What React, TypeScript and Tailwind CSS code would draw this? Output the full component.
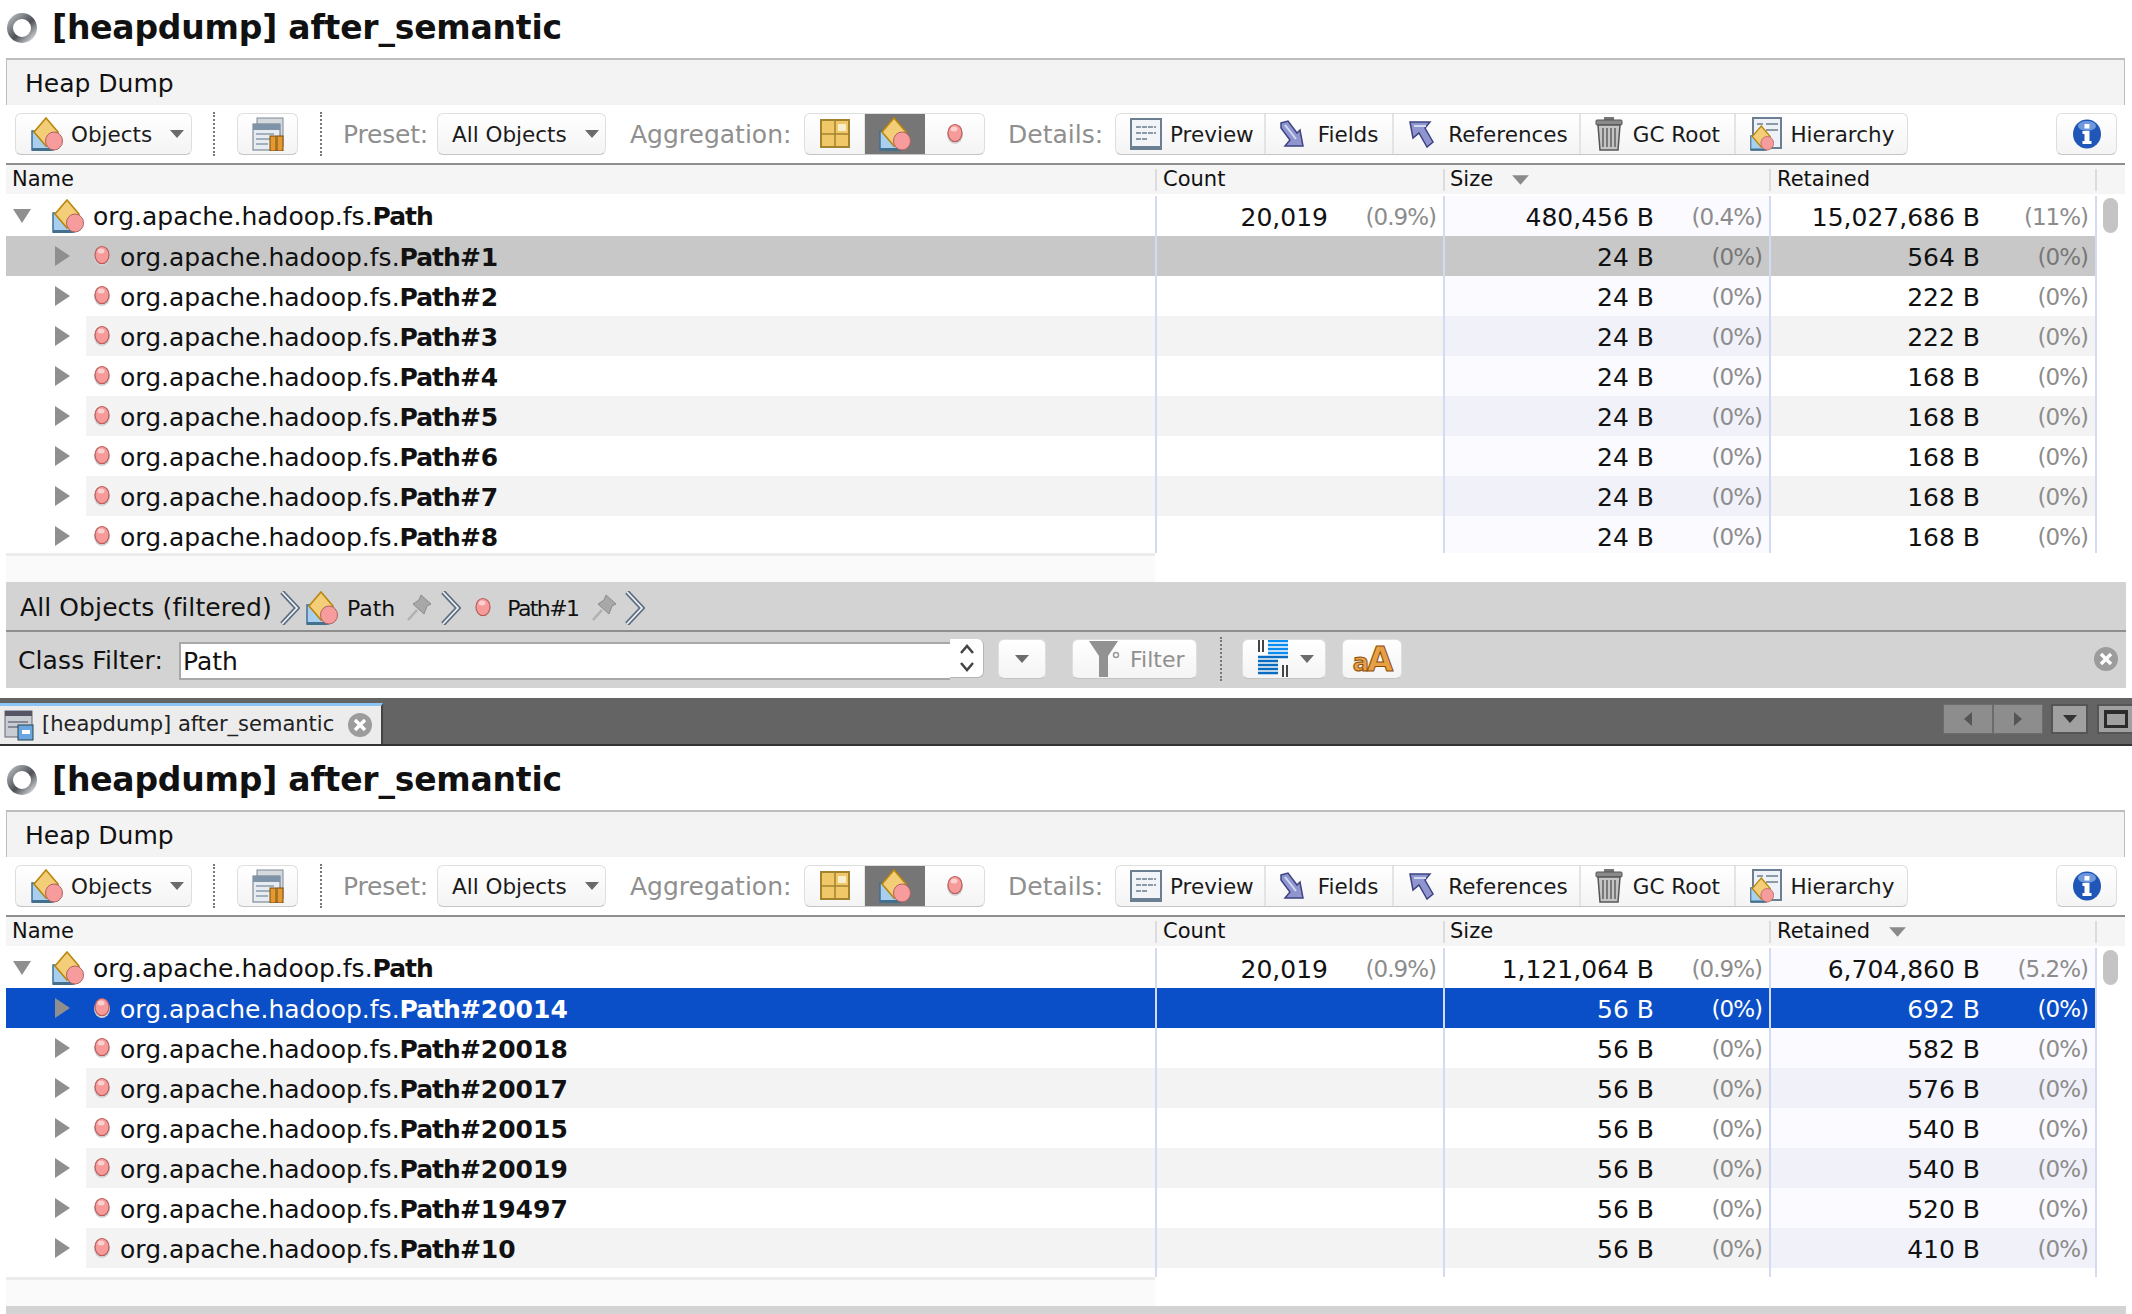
import { ReactNode } from "react";

const ClassIcon = ({ size = 32 }: { size?: number }) => (
  <svg width={size} height={size + 2} viewBox="0 0 32 34" className="shrink-0">
    <path d="M1 14 L14 14 L22 33 L1 33 Z" fill="#a8d0ee" stroke="#3f6f96" strokeWidth="1.5" />
    <rect x="1" y="31" width="20" height="3" fill="#44708f" />
    <path d="M15 1 L27 15 L15 29 L3 15 Z" fill="#f3cd78" stroke="#b8860b" strokeWidth="1.6" />
    <ellipse cx="23" cy="24" rx="8.5" ry="9" fill="#f79c9c" stroke="#b06060" strokeWidth="1" />
  </svg>
);

const Dot = () => (
  <svg width="18" height="24" viewBox="0 0 18 24" className="shrink-0">
    <ellipse cx="9" cy="13" rx="8" ry="9" fill="#d0d0d0" />
    <ellipse cx="9" cy="11" rx="7" ry="8.5" fill="#f79a9a" stroke="#b85c5c" strokeWidth="1.2" />
    <ellipse cx="8" cy="7" rx="3.5" ry="2.5" fill="#fbd0d0" />
  </svg>
);

const TriRight = () => (
  <svg width="15" height="24" viewBox="0 0 15 24" className="shrink-0">
    <path d="M0 2 L15 12 L0 22 Z" fill="#8f8f8f" />
  </svg>
);

const TriDown = () => (
  <svg width="18" height="18" viewBox="0 0 18 18" className="shrink-0">
    <path d="M0 2 L18 2 L9 16 Z" fill="#8f8f8f" />
  </svg>
);

const Caret = ({ color = "#6b6b6b", w = 14, h = 10 }: { color?: string; w?: number; h?: number }) => (
  <svg width={w} height={h} viewBox="0 0 14 10" className="shrink-0">
    <path d="M0 1 L14 1 L7 9 Z" fill={color} />
  </svg>
);

const Spinner = () => (
  <svg width="32" height="32" viewBox="0 0 32 32" className="shrink-0">
    <defs>
      <linearGradient id="ring" x1="0" y1="0" x2="1" y2="1">
        <stop offset="0" stopColor="#b4b8bc" />
        <stop offset="0.55" stopColor="#4c5056" />
        <stop offset="1" stopColor="#d8dade" />
      </linearGradient>
    </defs>
    <circle cx="16" cy="16" r="12" fill="none" stroke="url(#ring)" strokeWidth="6" />
  </svg>
);

const MemoryIcon = () => (
  <svg width="32" height="34" viewBox="0 0 32 34">
    <rect x="5" y="1" width="26" height="28" fill="#d5d9dd" stroke="#7d8a96" />
    <rect x="1" y="7" width="27" height="26" fill="#e8ecf0" stroke="#667788" />
    <rect x="1" y="7" width="27" height="6" fill="#7f93a8" />
    <path d="M4 17h18M4 22h14M4 27h12" stroke="#9fb0c0" strokeWidth="2" />
    <rect x="18" y="19" width="6" height="15" fill="#e69a2c" stroke="#7a4a10" />
    <rect x="25" y="19" width="6" height="15" fill="#e69a2c" stroke="#7a4a10" />
  </svg>
);

const GridIcon = () => (
  <svg width="30" height="30" viewBox="0 0 30 30">
    <rect x="1" y="1" width="28" height="27" fill="#f0c868" stroke="#a3832f" strokeWidth="2" />
    <path d="M15 1v27M1 15h28" stroke="#a3832f" strokeWidth="1.5" />
    <rect x="18" y="5" width="8" height="7" fill="#f9eecb" />
  </svg>
);

const PreviewIcon = () => (
  <svg width="32" height="32" viewBox="0 0 32 32">
    <rect x="1" y="1" width="30" height="30" fill="#f2f4f7" stroke="#6b7f93" strokeWidth="2" />
    <rect x="1" y="28" width="30" height="3" fill="#6b7f93" />
    <path d="M6 9h20M6 15h20M6 21h12" stroke="#8a9aa8" strokeWidth="2" strokeDasharray="5 1" />
  </svg>
);

const FieldsIcon = () => (
  <svg width="24" height="28" viewBox="0 0 24 28">
    <path d="M1 3 L8 1 L17 13 L20 10 L23 26 L5 26 L10 20 L1 8 Z" fill="#8f95cf" stroke="#3d4480" strokeWidth="1.5" />
    <path d="M5 5 L16 19" stroke="#d4d7f0" strokeWidth="2" />
  </svg>
);

const RefsIcon = () => (
  <svg width="26" height="28" viewBox="0 0 26 28">
    <path d="M2 2 L22 2 L17 8 L25 22 L19 27 L11 13 L5 18 Z" fill="#8f95cf" stroke="#3d4480" strokeWidth="1.5" />
    <path d="M6 6 L18 6" stroke="#d4d7f0" strokeWidth="2" />
  </svg>
);

const TrashIcon = () => (
  <svg width="28" height="34" viewBox="0 0 28 34">
    <rect x="9" y="0" width="10" height="4" fill="#777" />
    <rect x="1" y="3" width="26" height="5" rx="1" fill="#8a8a8a" stroke="#555" />
    <path d="M3 8 H25 L23 33 H5 Z" fill="#c4c4c4" stroke="#555" strokeWidth="1.5" />
    <path d="M8 11v19M12 11v19M16 11v19M20 11v19" stroke="#666" strokeWidth="1.6" />
  </svg>
);

const HierarchyIcon = () => (
  <div className="relative w-[32px] h-[34px]">
    <svg width="30" height="32" viewBox="0 0 30 32" className="absolute right-0 top-0">
      <rect x="1" y="1" width="28" height="30" fill="#eef1f5" stroke="#6b7f93" strokeWidth="2" />
      <path d="M5 7h6M14 7h12M14 13h12" stroke="#8a9aa8" strokeWidth="2" />
    </svg>
    <div className="absolute left-0 bottom-0">
      <ClassIcon size={24} />
    </div>
  </div>
);

const InfoIcon = () => (
  <svg width="28" height="30" viewBox="0 0 28 30">
    <ellipse cx="14" cy="15" rx="14" ry="14.5" fill="#1f56b8" />
    <ellipse cx="14" cy="7" rx="9" ry="5" fill="#6f97dc" />
    <rect x="11.5" y="5" width="5" height="4.5" fill="#fff" />
    <path d="M9.5 12h7v10h2v3h-9v-3h2v-7h-2z" fill="#fff" />
  </svg>
);

const Funnel = () => (
  <svg width="32" height="38" viewBox="0 0 32 38">
    <path d="M1 1 H30 L20 16 V37 H11 V16 Z" fill="#929292" />
    <circle cx="28" cy="15" r="2.5" fill="none" stroke="#999" strokeWidth="1.5" />
  </svg>
);

const ListIcon = () => (
  <svg width="30" height="38" viewBox="0 0 30 38">
    <rect x="0" y="0" width="2" height="12" fill="#444" />
    <rect x="4" y="0" width="2" height="12" fill="#444" />
    <path d="M10 1h20M10 5h20M10 9h20M10 13h20" stroke="#0d8cf0" strokeWidth="2.5" />
    <path d="M0 17h30M0 21h20M0 25h20M0 29h20M0 33h20" stroke="#0a6cc0" strokeWidth="2.5" />
    <rect x="24" y="25" width="2" height="12" fill="#444" />
    <rect x="28" y="25" width="2" height="12" fill="#444" />
  </svg>
);

const Pin = () => (
  <svg width="26" height="28" viewBox="0 0 26 28">
    <path d="M15 1 L25 10 L21 12 L18 20 L7 10 L13 6 Z" fill="#a8a8a8" stroke="#8c8c8c" />
    <path d="M11 16 L2 26" stroke="#b0b0b0" strokeWidth="2.5" />
  </svg>
);

const Crumb = () => (
  <svg width="20" height="34" viewBox="0 0 20 34" className="shrink-0">
    <path d="M2 1 L17 17 L2 33" fill="none" stroke="#5a6e80" strokeWidth="5" />
    <path d="M2 1 L17 17 L2 33" fill="none" stroke="#eef0f2" strokeWidth="1.8" />
  </svg>
);

const CloseDot = ({ size = 24 }: { size?: number }) => (
  <svg width={size} height={size} viewBox="0 0 24 24" className="shrink-0">
    <circle cx="12" cy="12" r="12" fill="#9c9c9c" />
    <path d="M7 7 L17 17 M17 7 L7 17" stroke="#fff" strokeWidth="3.4" />
  </svg>
);

const Btn = ({ className, children }: { className: string; children?: ReactNode }) => (
  <div className={`flex items-center rounded-[6px] border border-[#dedede] border-b-[#c4c4c4] bg-linear-to-b from-white to-[#f4f4f4] shrink-0 ${className}`}>
    {children}
  </div>
);

const Sep = ({ className }: { className: string }) => (
  <div className={`w-0 h-[44px] border-l-2 border-dotted border-[#777] shrink-0 ${className}`} />
);

const DetailBtn = ({ w, icon, label, gap }: { w: string; icon: ReactNode; label: string; gap: string }) => (
  <div className={`flex items-center h-full border-r-2 border-[#e4e4e4] last:border-r-0 pl-[14px] ${w} ${gap}`}>
    {icon}
    <span className="pt-[2px]">{label}</span>
  </div>
);

const Toolbar = () => (
  <div className="flex items-center h-[58px] text-[21.5px] text-[#1a1a1a]">
    <Btn className="ml-[15px] w-[177px] h-[42px] pl-[15px] gap-[8px]">
      <ClassIcon />
      <span className="pt-[2px]">Objects</span>
      <span className="ml-[10px]"><Caret /></span>
    </Btn>
    <Sep className="ml-[21px]" />
    <Btn className="ml-[22px] w-[61px] h-[42px] justify-center"><MemoryIcon /></Btn>
    <Sep className="ml-[22px]" />
    <span className="ml-[21px] pt-[2px] text-[25px] tracking-[-0.2px] text-[#8f8f8f]">Preset:</span>
    <Btn className="ml-[9px] w-[169px] h-[42px] pl-[14px]">
      <span className="pt-[2px]">All Objects</span>
      <span className="ml-[18px]"><Caret /></span>
    </Btn>
    <span className="ml-[24px] pt-[2px] text-[25px] text-[#8f8f8f]">Aggregation:</span>
    <Btn className="absolute left-[804px] w-[181px] h-[42px] overflow-hidden">
      <div className="w-[60px] h-full flex items-center justify-center border-r border-[#e4e4e4]"><GridIcon /></div>
      <div className="w-[60px] h-full flex items-center justify-center bg-[#767676]"><ClassIcon /></div>
      <div className="flex-1 h-full flex items-center justify-center"><Dot /></div>
    </Btn>
    <span className="absolute left-[1008px] pt-[2px] text-[25px] text-[#8f8f8f]">Details:</span>
    <Btn className="absolute left-[1115px] w-[793px] h-[42px] overflow-hidden">
      <DetailBtn w="w-[150px]" gap="gap-[8px]" icon={<PreviewIcon />} label="Preview" />
      <DetailBtn w="w-[129px]" gap="gap-[14px]" icon={<FieldsIcon />} label="Fields" />
      <DetailBtn w="w-[187px]" gap="gap-[14px]" icon={<RefsIcon />} label="References" />
      <DetailBtn w="w-[156px]" gap="gap-[10px]" icon={<TrashIcon />} label="GC Root" />
      <DetailBtn w="w-[171px]" gap="gap-[8px]" icon={<HierarchyIcon />} label="Hierarchy" />
    </Btn>
    <Btn className="absolute left-[2056px] w-[61px] h-[42px] justify-center"><InfoIcon /></Btn>
  </div>
);

type Row = { id: string; size: string; retained: string };

const Num = ({ value, pct, selected }: { value: string; pct: string; selected?: string }) => (
  <div className="flex items-center justify-end h-full pr-[7px] pt-[3px]">
    <span>{value}</span>
    <span className={`w-[108px] text-right text-[23px] tracking-[-1px] ${selected === "blue" ? "text-white" : selected === "gray" ? "text-[#777]" : "text-[#8c8c8c]"}`}>{pct}</span>
  </div>
);

const colLine = "border-l-2 border-[#d3dbf3]";

const Panel = ({ rows, rootSize, rootRetained, sorted, selected, bodyH }: {
  rows: Row[];
  rootSize: [string, string];
  rootRetained: [string, string];
  sorted: "size" | "retained";
  selected: "gray" | "blue";
  bodyH: string;
}) => {
  const sizeTint = sorted === "size";
  return (
    <div className="relative">
      <div className="flex items-center h-[58px] pl-[6px] gap-[14px] pb-[2px]">
        <Spinner />
        <span className="text-[33px] tracking-[-0.2px] font-bold text-[#111]">[heapdump] after_semantic</span>
      </div>
      <div className="h-[47px] ml-[6px] mr-[7px] bg-[#f3f3f3] border-t-2 border-l border-r border-[#bdbdbd] pl-[18px] pt-[2px] flex items-center text-[25px] text-[#111]">
        Heap Dump
      </div>
      <div className="relative"><Toolbar /></div>
      <div className="ml-[6px] mr-[7px] border-t-2 border-[#8e8e8e]">
        <div className="flex items-center h-[29px] bg-[#f5f5f5] text-[21px] text-[#111] mb-[2px]">
          <div className="w-[1149px] pl-[6px]">Name</div>
          <div className="w-[288px] h-[22px] flex items-center pl-[6px] border-l-2 border-[#dcdcdc]">Count</div>
          <div className="w-[326px] h-[22px] flex items-center pl-[5px] gap-[18px] border-l-2 border-[#dcdcdc]">
            Size {sorted === "size" && <Caret color="#8a8a8a" w={19} h={12} />}
          </div>
          <div className="w-[326px] h-[22px] flex items-center pl-[6px] gap-[18px] border-l-2 border-[#dcdcdc]">
            Retained {sorted === "retained" && <Caret color="#8a8a8a" w={19} h={12} />}
          </div>
          <div className="w-[30px] h-[22px] border-l-2 border-[#dcdcdc]" />
        </div>
        <div className={`relative overflow-hidden text-[25px] text-[#111] ${bodyH}`}>
          <div className="flex h-[40px]">
            <div className="w-[1149px] flex items-center pl-[7px]">
              <TriDown />
              <span className="ml-[21px]"><ClassIcon /></span>
              <span className="ml-[9px] pt-[2px]">org.apache.hadoop.fs.<b className="tracking-[-1px]">Path</b></span>
            </div>
            <div className={`w-[288px] ${colLine}`}><Num value="20,019" pct="(0.9%)" /></div>
            <div className={`w-[326px] ${colLine} ${sizeTint ? "bg-[#fafaff]" : ""}`}><Num value={rootSize[0]} pct={rootSize[1]} /></div>
            <div className={`w-[326px] ${colLine} ${sizeTint ? "" : "bg-[#fafaff]"}`}><Num value={rootRetained[0]} pct={rootRetained[1]} /></div>
            <div className={`w-[30px] ${colLine}`} />
          </div>
          {rows.map((r, i) => {
            const isSel = i === 0;
            const alt = i % 2 === 0;
            const selBg = selected === "blue" ? "bg-[#0b4fc8] text-white" : "bg-[#c8c8c8]";
            const tint = alt ? "bg-[#f1f1fa]" : "bg-[#fafaff]";
            const plain = alt ? "bg-[#f3f3f3]" : "";
            return (
              <div key={r.id} className={`flex h-[40px] ${isSel ? selBg : ""}`}>
                <div className="w-[1149px] flex">
                  <div className="w-[80px] pl-[49px] flex items-center shrink-0"><TriRight /></div>
                  <div className={`flex-1 flex items-center pl-[7px] ${isSel ? "" : plain}`}>
                    <Dot />
                    <span className="ml-[9px] pt-[3px]">org.apache.hadoop.fs.<b><span className="tracking-[-1px]">Path</span>#{r.id}</b></span>
                  </div>
                </div>
                <div className={`w-[288px] ${colLine} ${isSel ? "" : plain}`} />
                <div className={`w-[326px] ${colLine} ${isSel ? "" : sizeTint ? tint : plain}`}>
                  <Num value={r.size} pct="(0%)" selected={isSel ? selected : undefined} />
                </div>
                <div className={`w-[326px] ${colLine} ${isSel ? "" : sizeTint ? plain : tint}`}>
                  <Num value={r.retained} pct="(0%)" selected={isSel ? selected : undefined} />
                </div>
              </div>
            );
          })}
          <div className="absolute right-0 top-0 bottom-0 w-[30px] bg-white border-l-2 border-[#d3dbf3]">
            <div className="ml-[6px] mt-[2px] w-[15px] h-[35px] rounded-full bg-[#c4c4c4]" />
          </div>
          <div className="absolute left-[1149px] top-0 bottom-0 w-0 border-l-2 border-[#d3dbf3]" />
          <div className="absolute left-[1437px] top-0 bottom-0 w-0 border-l-2 border-[#d3dbf3]" />
          <div className="absolute left-[1763px] top-0 bottom-0 w-0 border-l-2 border-[#d3dbf3]" />
        </div>
        <div className="w-[1149px] h-[29px] bg-[#fafafa] border-t-[3px] border-[#ececec]" />
      </div>
    </div>
  );
};

const firstRows: Row[] = [
  { id: "1", size: "24 B", retained: "564 B" },
  { id: "2", size: "24 B", retained: "222 B" },
  { id: "3", size: "24 B", retained: "222 B" },
  { id: "4", size: "24 B", retained: "168 B" },
  { id: "5", size: "24 B", retained: "168 B" },
  { id: "6", size: "24 B", retained: "168 B" },
  { id: "7", size: "24 B", retained: "168 B" },
  { id: "8", size: "24 B", retained: "168 B" },
];

const secondRows: Row[] = [
  { id: "20014", size: "56 B", retained: "692 B" },
  { id: "20018", size: "56 B", retained: "582 B" },
  { id: "20017", size: "56 B", retained: "576 B" },
  { id: "20015", size: "56 B", retained: "540 B" },
  { id: "20019", size: "56 B", retained: "540 B" },
  { id: "19497", size: "56 B", retained: "520 B" },
  { id: "10", size: "56 B", retained: "410 B" },
];

export default function App() {
  return (
    <div className="relative w-[2132px] h-[1314px] overflow-hidden bg-white font-['DejaVu_Sans',sans-serif]">
      <Panel
        rows={firstRows}
        rootSize={["480,456 B", "(0.4%)"]}
        rootRetained={["15,027,686 B", "(11%)"]}
        sorted="size"
        selected="gray"
        bodyH="h-[357px]"
      />
      {/* breadcrumb + class filter */}
      <div className="ml-[6px] mr-[6px] h-[50px] pt-[4px] bg-[#d3d3d3] border-b-2 border-[#8e8e8e] flex items-center pl-[14px] text-[25px] text-[#111]">
        <span className="tracking-[0.1px]">All Objects (filtered)</span>
        <span className="ml-[8px]"><Crumb /></span>
        <span className="ml-[6px]"><ClassIcon /></span>
        <span className="ml-[9px] text-[22px]">Path</span>
        <span className="ml-[11px]"><Pin /></span>
        <span className="ml-[9px]"><Crumb /></span>
        <span className="ml-[13px]"><Dot /></span>
        <span className="ml-[15px] text-[22px] tracking-[-1.6px]">Path#1</span>
        <span className="ml-[13px]"><Pin /></span>
        <span className="ml-[8px]"><Crumb /></span>
      </div>
      <div className="ml-[6px] mr-[6px] h-[56px] bg-[#d3d3d3] flex items-center text-[25px] text-[#111] relative">
        <span className="ml-[12px] pt-[2px] tracking-[0.1px]">Class Filter:</span>
        <div className="absolute left-[173px] top-[10px] w-[771px] h-[38px] pt-[2px] bg-white border-t-2 border-l-2 border-b-2 border-[#a8a8a8] flex items-center pl-[2px]">Path</div>
        <div className="absolute left-[944px] top-[7px] w-[34px] h-[39px] bg-white rounded-r-[6px] border-b border-r border-[#b5b5b5] flex items-center justify-center">
          <svg width="16" height="30" viewBox="0 0 16 30">
            <path d="M2 10 L8 3 L14 10 M2 20 L8 27 L14 20" fill="none" stroke="#444" strokeWidth="2.5" />
          </svg>
        </div>
        <Btn className="absolute left-[992px] top-[7px] w-[48px] h-[40px] justify-center"><Caret /></Btn>
        <Btn className="absolute left-[1066px] top-[7px] w-[125px] h-[40px] pl-[15px] gap-[10px] text-[22px] text-[#8f8f8f]"><Funnel /><span>Filter</span></Btn>
        <Sep className="absolute left-[1214px] top-[5px]" />
        <Btn className="absolute left-[1236px] top-[7px] w-[84px] h-[40px] pl-[15px] gap-[12px]"><ListIcon /><Caret /></Btn>
        <Btn className="absolute left-[1336px] top-[7px] w-[60px] h-[40px] justify-center">
          <span className="font-bold leading-none text-[#e8a045] [-webkit-text-stroke:1px_#8a4b08] tracking-[-2px]"><span className="text-[24px]">a</span><span className="text-[34px]">A</span></span>
        </Btn>
        <span className="absolute right-[8px] top-[15px]"><CloseDot /></span>
      </div>
      {/* tab strip */}
      <div className="mt-[10px] h-[48px] bg-[#646464] border-b-2 border-[#333] flex items-end justify-between">
        <div className="w-[383px] h-[41px] bg-[#ececec] border-t-[3px] border-[#8cc4f5] border-r-2 border-r-[#444] flex items-center pl-[4px] gap-[8px] text-[21px] text-[#222] whitespace-nowrap">
          <svg width="30" height="32" viewBox="0 0 30 32" className="shrink-0">
            <rect x="1" y="2" width="27" height="26" fill="#c8cdd2" stroke="#667" />
            <rect x="1" y="2" width="27" height="5" fill="#556" />
            <path d="M4 13h20M4 18h12" stroke="#889" strokeWidth="2" />
            <rect x="14" y="16" width="15" height="15" fill="#6ba6e0" stroke="#245" />
            <rect x="18" y="21" width="8" height="4" fill="#fff" />
          </svg>
          <span>[heapdump] after_semantic</span>
          <span className="ml-[6px]"><CloseDot /></span>
        </div>
        <div className="flex items-center h-full pb-[10px] pt-[6px]">
          <div className="w-[100px] h-[30px] flex bg-[#8d8d8d] border border-[#6c6c6c]">
            <div className="flex-1 border-r-2 border-[#6c6c6c] flex items-center justify-center">
              <svg width="8" height="14" viewBox="0 0 8 14"><path d="M8 0 V14 L0 7 Z" fill="#555" /></svg>
            </div>
            <div className="flex-1 flex items-center justify-center">
              <svg width="8" height="14" viewBox="0 0 8 14"><path d="M0 0 V14 L8 7 Z" fill="#555" /></svg>
            </div>
          </div>
          <div className="ml-[8px] w-[37px] h-[30px] bg-[#a0a0a0] border-2 border-[#555] flex items-center justify-center"><Caret color="#333" /></div>
          <div className="ml-[9px] w-[35px] h-[30px] bg-[#a0a0a0] border-2 border-r-0 border-[#555] flex items-center pl-[5px]">
            <div className="w-[24px] h-[18px] border-[3px] border-t-[4px] border-[#2b2b2b]" />
          </div>
        </div>
      </div>
      <div className="mt-[6px]">
        <Panel
          rows={secondRows}
          rootSize={["1,121,064 B", "(0.9%)"]}
          rootRetained={["6,704,860 B", "(5.2%)"]}
          sorted="retained"
          selected="blue"
          bodyH="h-[329px]"
        />
      </div>
      <div className="ml-[6px] mr-[6px] h-[20px] bg-[#d3d3d3]" />
    </div>
  );
}
